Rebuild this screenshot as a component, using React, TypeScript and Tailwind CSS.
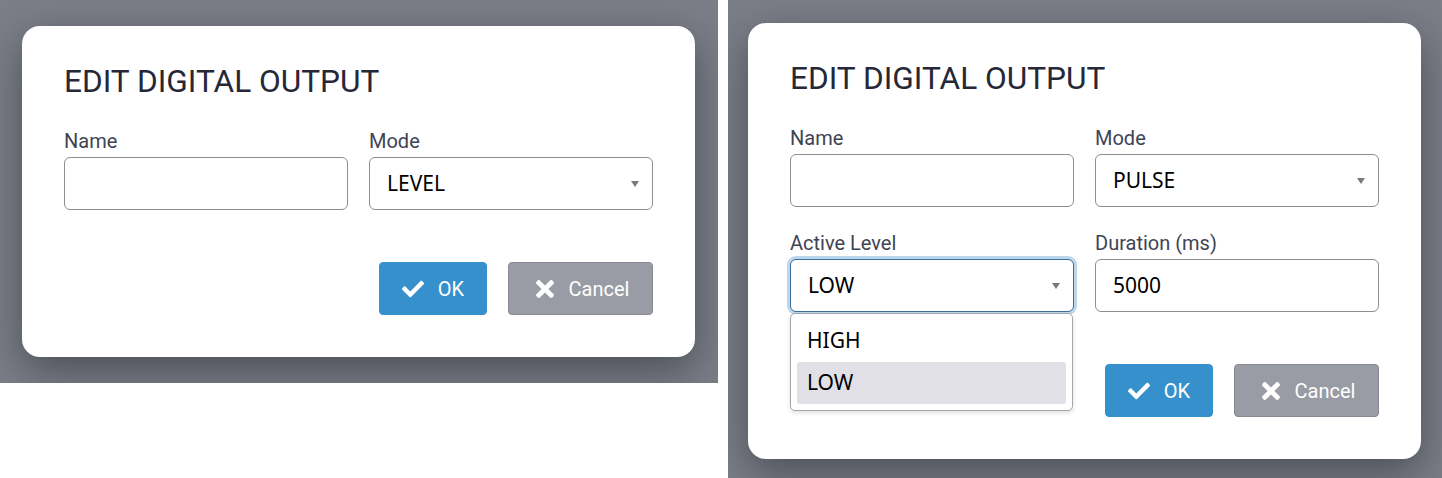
import type { ReactNode } from 'react';
import { FaCheck, FaTimes } from 'react-icons/fa';

function Caret() {
  return (
    <svg width="8" height="6" viewBox="0 0 8 6" className="shrink-0">
      <path d="M0 0 H8 L4 6 Z" fill="#7a7a7a" />
    </svg>
  );
}

function Field({ label, children }: { label: string; children: ReactNode }) {
  return (
    <div className="flex flex-col">
      <label className="mb-[4px] font-['Roboto',sans-serif] text-[20px] leading-[24px] text-[#3e4455]">
        {label}
      </label>
      {children}
    </div>
  );
}

function TextBox({ value = '' }: { value?: string }) {
  return (
    <div className="flex h-[53px] items-center rounded-[6px] border border-[#8d8e96] bg-white px-[17px] font-['Noto_Sans',sans-serif] text-[21px] text-black">
      {value}
    </div>
  );
}

function SelectBox({
  value,
  focused = false,
  options,
}: {
  value: string;
  focused?: boolean;
  options?: string[];
}) {
  return (
    <div className="relative">
      <div
        className={`flex h-[53px] items-center justify-between rounded-[6px] border bg-white pl-[17px] pr-[13px] font-['Noto_Sans',sans-serif] text-[21px] text-black ${
          focused ? 'border-[#3a6e9c] shadow-[0_0_0_3px_#bcd7ec]' : 'border-[#8d8e96]'
        }`}
      >
        <span>{value}</span>
        <Caret />
      </div>
      {options && (
        <div className="absolute left-0 right-[1px] top-full z-10 mt-[1px] rounded-[5px] border border-[#a7a7ab] bg-white px-[6px] py-[6px] shadow-[0_2px_4px_rgba(0,0,0,0.12)]">
          {options.map((o) => (
            <div
              key={o}
              className={`flex h-[42px] items-center rounded-[3px] pl-[10px] font-['Noto_Sans',sans-serif] text-[21px] text-black ${
                o === value ? 'bg-[#e0e0e6]' : ''
              }`}
            >
              {o}
            </div>
          ))}
        </div>
      )}
    </div>
  );
}

function Buttons() {
  return (
    <div className="mt-[52px] flex justify-end gap-[21px] font-['Roboto',sans-serif] text-[20px] text-white">
      <button className="flex h-[53px] w-[108px] items-center justify-center gap-[14px] rounded-[4px] border border-[#3690cb] bg-[#3690cb]">
        <FaCheck size={22} />
        <span>OK</span>
      </button>
      <button className="flex h-[53px] w-[145px] items-center justify-center gap-[11px] rounded-[4px] border border-[#878a92] bg-[#999ca4]">
        <FaTimes size={26} />
        <span>Cancel</span>
      </button>
    </div>
  );
}

function Modal({ children }: { children: ReactNode }) {
  return (
    <div className="w-[673px] rounded-[18px] bg-white px-[42px] pb-[42px] pt-[37px] shadow-[0_14px_40px_rgba(20,22,30,0.45)]">
      <h2 className="mb-[29px] font-['Roboto',sans-serif] text-[31.6px] leading-[37px] text-[#262838]">
        EDIT DIGITAL OUTPUT
      </h2>
      {children}
      <Buttons />
    </div>
  );
}

export default function App() {
  return (
    <div className="flex w-[1442px] items-start gap-[10px] bg-white">
      <div className="flex h-[383px] w-[718px] items-start overflow-hidden bg-[#7b7e87] pl-[22px] pt-[26px]">
        <Modal>
          <div className="grid grid-cols-2 gap-x-[21px] gap-y-[24px]">
            <Field label="Name">
              <TextBox />
            </Field>
            <Field label="Mode">
              <SelectBox value="LEVEL" />
            </Field>
          </div>
        </Modal>
      </div>

      <div className="flex h-[478px] w-[714px] items-start overflow-hidden bg-[#7b7e87] pl-[20px] pt-[23px]">
        <Modal>
          <div className="grid grid-cols-2 gap-x-[21px] gap-y-[24px]">
            <Field label="Name">
              <TextBox />
            </Field>
            <Field label="Mode">
              <SelectBox value="PULSE" />
            </Field>
            <Field label="Active Level">
              <SelectBox value="LOW" focused options={['HIGH', 'LOW']} />
            </Field>
            <Field label="Duration (ms)">
              <TextBox value="5000" />
            </Field>
          </div>
        </Modal>
      </div>
    </div>
  );
}
